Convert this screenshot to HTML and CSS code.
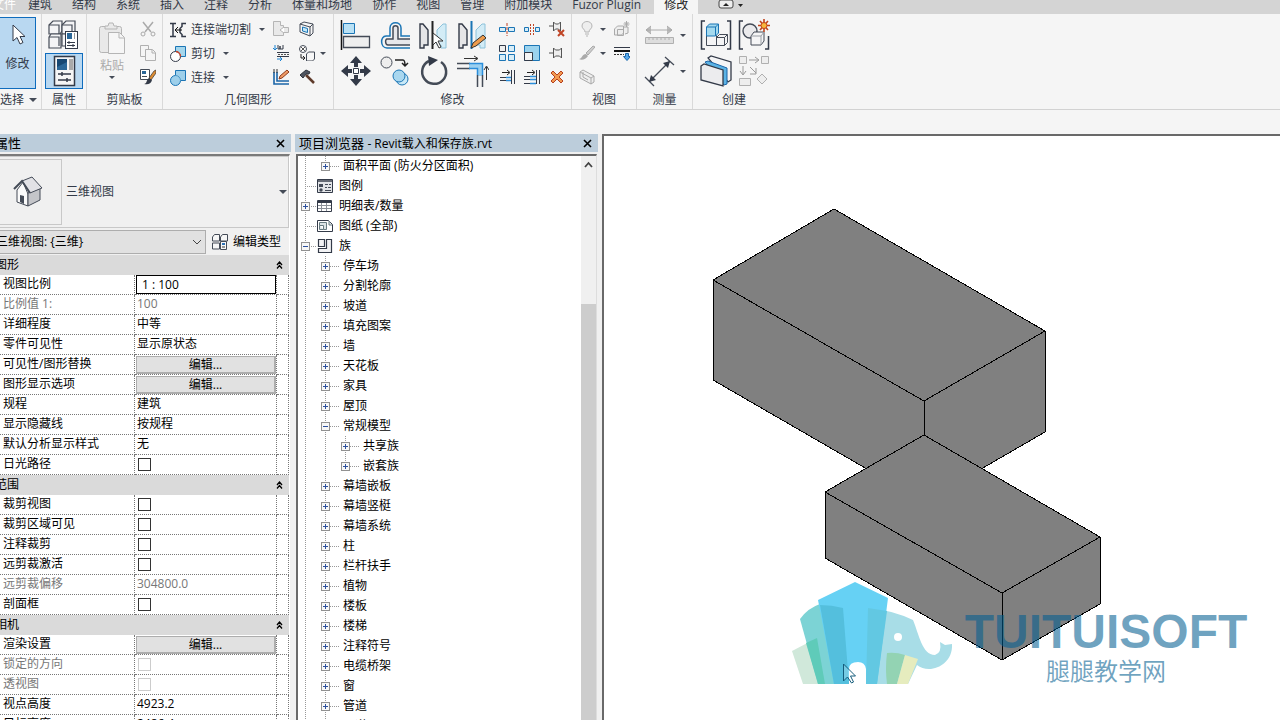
FILE: index.html
```html
<!DOCTYPE html>
<html lang="zh-CN">
<head>
<meta charset="utf-8">
<title>Revit载入和保存族.rvt</title>
<link rel="stylesheet" href="styles.css">
</head>
<body>
<nav class="tabs">
  <button class="tab file">文件</button>
  <button class="tab">建筑</button>
  <button class="tab">结构</button>
  <button class="tab">系统</button>
  <button class="tab">插入</button>
  <button class="tab">注释</button>
  <button class="tab">分析</button>
  <button class="tab">体量和场地</button>
  <button class="tab">协作</button>
  <button class="tab">视图</button>
  <button class="tab">管理</button>
  <button class="tab">附加模块</button>
  <button class="tab">Fuzor Plugin</button>
  <button class="tab active">修改</button>
  <button class="tab-toggle" aria-label="最小化功能区"><svg width="26" height="14" viewBox="0 0 26 14"><rect x="1" y="0" width="14" height="8" rx="2" fill="#eee" stroke="#444"/><path d="M5 6l3-3 3 3z" fill="#222"/><path d="M20 4h5l-2.500 3z" fill="#222"/></svg></button>
</nav>

<header class="ribbon">
  <section class="group select">
    <div class="body">
      <button class="tool modify on"><svg width="20" height="24" viewBox="0 0 20 24"><path d="M5 1v16l4-3.500 3 6.500 3-1.500-3-6h5z" fill="#fff" stroke="#333a48"/></svg><span>修改</span></button>
    </div>
    <h2>选择 <i class="arrow big"></i></h2>
  </section>

  <section class="group props">
    <div class="body">
      <div class="large single">
        <button class="tool" aria-label="类型属性"><svg viewBox="0 0 32 32"><g fill="#f4f4f6" stroke="#454b57" stroke-width="1.200"><path d="M1 6l4-4h9v10l-2 3H1z"/><path d="M14 6l4-4h9v10l-2 3H14z"/><path d="M1 18l2-3h10v14H1z"/><path d="M14 15h10v12H14z"/><path d="M1 6h10v9M14 6h10v6M1 18h10v9" fill="none"/></g><rect x="17.500" y="12.500" width="12" height="17" fill="#fff" stroke="#333a48"/><path d="M19 14h5v6h-5z" fill="#2b6798"/><path d="M26 14h1v6h-1z" fill="#999"/><path d="M19 23.500h8M19 26.500h8M21 22v3M25 25v3" stroke="#333a48"/></svg></button>
        <button class="tool on" aria-label="属性"><svg viewBox="0 0 32 32"><rect x="6.500" y="1.500" width="20" height="29" fill="#f5f5f5" stroke="#333a48" stroke-width="1.500"/><path d="M9 4h10v11H9z" fill="#2b6798"/><path d="M9 4h10v3L9 12z" fill="#174873"/><path d="M21 4h4v11h-4z" fill="#aaa"/><path d="M10 19h13M10 25h13M14 17v4M19 23v4" stroke="#333a48" stroke-width="1.500"/></svg></button>
      </div>
    </div>
    <h2>属性</h2>
  </section>

  <section class="group clip">
    <div class="body">
      <button class="tool paste" disabled><svg width="32" height="34" viewBox="0 0 32 34"><g fill="#e9e9e9" stroke="#b5b5b5"><rect x="3.500" y="4.500" width="22" height="26" rx="2"/><path d="M9 7V4h3l1-3h4l1 3h3v3z"/><path d="M12.500 10.500h11l5 5v16h-16z" fill="#f6f6f6"/><path d="M23 11v5h5" fill="none"/></g></svg><span>粘贴</span><i class="arrow"></i></button>
      <div class="small">
        <button class="tool" aria-label="剪切" disabled><svg viewBox="0 0 16 16"><path d="M3 1l8 10M13 1L5 11" stroke="#aaa" stroke-width="1.500"/><circle cx="3" cy="13" r="2" fill="none" stroke="#aaa"/><circle cx="13" cy="13" r="2" fill="none" stroke="#aaa"/></svg></button>
        <button class="tool" aria-label="复制" disabled><svg viewBox="0 0 16 16"><g fill="#f5f5f5" stroke="#b0b0b0"><path d="M.500 .500h8v11h-8z"/><path d="M5.500 4.500h7l3 3v8h-10z"/><path d="M12 5v3h3"/></g></svg></button>
        <button class="tool" aria-label="匹配类型"><svg viewBox="0 0 16 16"><path d="M.500 .500h9v10h-9z" fill="#fff" stroke="#444b57"/><path d="M2 2h4v3H2z" fill="#2b6798"/><path d="M2 7.500h5" stroke="#444b57"/><path d="M9 9l5-7 2-1v3l-5 7z" fill="#dd8c32" stroke="#333" stroke-width=".700"/><path d="M4 15c3 0 2-4 5-6l3 2c-1 4-4 5-8 4z" fill="#333a48"/></svg></button>
      </div>
    </div>
    <h2>剪贴板</h2>
  </section>

  <section class="group geom">
    <div class="body">
      <div class="small text">
        <button class="tool"><svg viewBox="0 0 16 16"><path d="M0 1.500h6M3 1v13M0 14.500h6M16 1.500h-4v3l-2 2v4l2 2v2h4" fill="none" stroke="#333a48" stroke-width="1.500"/><path d="M5 8h7M8 5L5 8l3 3" stroke="#111" fill="none"/></svg><span>连接端切割</span><i class="arrow"></i></button>
        <button class="tool"><svg viewBox="0 0 16 16"><path d="M5.500 .500h10v10h-10z" fill="#a4d6ec" stroke="#1b75b5"/><circle cx="5.500" cy="10.500" r="5" fill="#fff" stroke="#333a48"/><path d="M6 5.500a5 5 0 0 1 4.500 5" fill="none" stroke="#c6442c" stroke-width="1.500"/></svg><span>剪切</span><i class="arrow"></i></button>
        <button class="tool"><svg viewBox="0 0 16 16"><path d="M5.500 .500h10v10h-5a5 5 0 1 1-5-5z" fill="#9dcfea" stroke="#1b75b5"/><path d="M5.500 5.500a5 5 0 0 1 5 5" fill="none" stroke="#4c9ac8"/></svg><span>连接</span><i class="arrow"></i></button>
      </div>
      <div class="small duo">
        <button class="tool" aria-label="连接端" disabled><svg viewBox="0 0 16 16"><path d="M.500 .500h7v4h3v2h5v5h-5v3h-10z" fill="#e9e9e9" stroke="#b5b5b5"/><path d="M11 6L7 9l4 3" fill="#fff" stroke="#b5b5b5"/></svg></button>
        <button class="tool" aria-label="拆分面"><svg viewBox="0 0 16 16"><path d="M1 3l4-2 9 2v9l-3 3-10-4z" fill="#f6f6f6" stroke="#444b57"/><path d="M11 6l3-3M11 6v9M1 3l10 3" stroke="#444b57" fill="none"/><path d="M3.500 6l5 1.500v4l-5-1.500z" fill="#c6e8f7" stroke="#1b75b5"/></svg></button>
        <button class="tool" aria-label="墙洞口"><svg viewBox="0 0 16 16"><path d="M2 0v5M0 3l2 2 2-2M4 14h5M7 12l2 2-2 2" stroke="#1b82d1" fill="none"/><path d="M5 0v4h2V1v3h3V0M4 7.500h12M4 11.500h12" stroke="#333a48" fill="none"/><path d="M5 9.500h11" stroke="#555" stroke-dasharray="2 1"/></svg></button>
        <button class="tool" aria-label="填色"><svg viewBox="0 0 16 16"><circle cx="4" cy="4" r="3.500" fill="#fff" stroke="#444b57"/><path d="M2 2l4 4M6 2L2 6" stroke="#555"/><path d="M7.500 9l2-2h6v7l-2 2h-6z" fill="#f7f7f7" stroke="#444b57"/><path d="M2 9v4h4M4 11l2 2-2 2" fill="none" stroke="#222"/></svg></button>
        <button class="tool" aria-label="梁柱连接"><svg viewBox="0 0 16 16"><path d="M1 3v12h15M4 3v9h12" stroke="#1b65a8" fill="none" stroke-width="1.600"/><path d="M1 0v4M4 0v4" stroke="#333"/><path d="M6 10l1-3 7-6 2 2-7 6z" fill="#ef9b66" stroke="#8d3d20"/></svg></button>
        <button class="tool" aria-label="拆除"><svg viewBox="0 0 16 16"><path d="M7 6l8 8" stroke="#5e3a2a" stroke-width="2.500"/><path d="M1 6l6-5 4 2-1 2H7L4 9z" fill="#4f5560" stroke="#30343c"/></svg></button>
      </div>
      <i class="arrow side"></i>
    </div>
    <h2>几何图形</h2>
  </section>

  <section class="group edit">
    <div class="body">
      <div class="large four">
        <button class="tool" aria-label="对齐"><svg viewBox="0 0 32 32"><path d="M1.500 1v30" stroke="#111" stroke-width="1.500"/><path d="M3.500 4.500h11v10h-11z" fill="#b9e1f5" stroke="#1b75b5"/><path d="M3.500 17.500h26v11h-26z" fill="#eee" stroke="#444b57" stroke-width="1.300"/></svg></button>
        <button class="tool" aria-label="偏移"><svg viewBox="0 0 32 32"><path d="M31 17h-9V9c0-7-11-7-11 0v8H7c-6 0-6 12 1 12h23" fill="none" stroke="#1b75b5" stroke-width="1.500"/><path d="M31 20h-12V9c0-3-5-3-5 0v11H8c-2 0-2 6 1 6h22" fill="#e7e7ea" stroke="#444b57" stroke-width="1.500"/></svg></button>
        <button class="tool" aria-label="镜像 - 拾取轴"><svg viewBox="0 0 32 32"><path d="M2 5h3l5 6v15H6v3H2z" fill="#e5e5e7" stroke="#333a48" stroke-width="1.400"/><path d="M28 5h-3l-6 6v15h4v3h5z" fill="#d3ecf6" stroke="#8dc2da"/><path d="M14.500 2v28" stroke="#222" stroke-width="2"/><path d="M15 14v12l3-3 3 6 2-1-3-6h5z" fill="#fff" stroke="#333"/></svg></button>
        <button class="tool" aria-label="镜像 - 绘制轴"><svg viewBox="0 0 32 32"><path d="M2 5h3l5 6v15H6v3H2z" fill="#e5e5e7" stroke="#333a48" stroke-width="1.400"/><path d="M28 5h-3l-6 6v15h4v3h5z" fill="#d3ecf6" stroke="#8dc2da"/><path d="M14.500 2v28" stroke="#1b75b5" stroke-width="2"/><path d="M14 29l2-5 10-8 3 3-10 8z" fill="#ed9b4c" stroke="#333"/></svg></button>
        <button class="tool" aria-label="移动"><svg viewBox="0 0 32 32"><path d="M16 1l6 7h-4v4h-4V8h-4zM16 31l6-7h-4v-4h-4v4h-4zM1 16l7-6v4h4v4H8v4zM31 16l-7-6v4h-4v4h4v4z" fill="#333a48"/><path d="M13.500 13.500h5v5h-5z" fill="#fff" stroke="#333a48"/></svg></button>
        <button class="tool" aria-label="复制"><svg viewBox="0 0 32 32"><circle cx="7.500" cy="7.500" r="5.500" fill="#eee" stroke="#444b57"/><path d="M16 5h8q2 0 2 6M23 8l3 3 3-3" fill="none" stroke="#222" stroke-width="1.500"/><g fill="#c9e9f7" stroke="#1b75b5"><circle cx="23" cy="24" r="6"/><circle cx="20" cy="21" r="6" fill="#a9d7ef"/></g></svg></button>
        <button class="tool" aria-label="旋转"><svg viewBox="0 0 32 32"><path d="M11 6a12 12 0 1 0 12 1" fill="none" stroke="#444b57" stroke-width="2.500"/><path d="M10 1l10 4-9 6z" fill="#333a48"/></svg></button>
        <button class="tool" aria-label="修剪/延伸为角"><svg viewBox="0 0 32 32"><path d="M12 9h13v12h-4v-8h-9z" fill="#9cd0f0"/><path d="M0 8.500h13M0 13.500h13M20.500 20v12M25.500 20v12" stroke="#444b57" stroke-width="1.500"/><path d="M12 8.500h13.500V20M12 13.500h8.500V20" fill="none" stroke="#2b8edb" stroke-width="1.500"/><path d="M7 3.500h13M17 1l4 2.500L17 6M29.500 25V12M27 15l2.500-4 2.500 4" fill="none" stroke="#333"/></svg></button>
      </div>
      <div class="small three">
        <button class="tool" aria-label="拆分图元"><svg viewBox="0 0 16 16"><path d="M.500 6.500h6v4h-6zM9.500 6.500h6v4h-6z" fill="#d7edf7" stroke="#1b75b5"/><path d="M8 2v13" stroke="#c04425" stroke-dasharray="3 1"/></svg></button>
        <button class="tool" aria-label="用间隙拆分"><svg viewBox="0 0 16 16"><path d="M.500 6.500h4v4h-4zM11.500 6.500h4v4h-4z" fill="#d7edf7" stroke="#1b75b5"/><path d="M6.500 3v11M9.500 3v11" stroke="#c04425" stroke-dasharray="2 1"/></svg></button>
        <button class="tool" aria-label="解锁"><svg viewBox="0 0 16 16"><path d="M0 5h4M4.500 1v9l2-2h3l2 2V1l-2 2h-3z" fill="#eee" stroke="#555"/><path d="M9 9l6 6M15 9l-6 6" stroke="#c04425" stroke-width="2"/></svg></button>
        <button class="tool" aria-label="阵列"><svg viewBox="0 0 16 16"><g fill="#d7edf7" stroke="#1b75b5"><path d="M.500 .500h6v6h-6z" fill="#eee" stroke="#333a48"/><path d="M9.500 .500h6v6h-6zM.500 9.500h6v6h-6zM9.500 9.500h6v6h-6z"/></g></svg></button>
        <button class="tool" aria-label="缩放"><svg viewBox="0 0 16 16"><path d="M.500 .500h15v15H.500z" fill="#9bd3ee" stroke="#1b75b5"/><path d="M.500 7.500h8v8h-8z" fill="#f4f4f4" stroke="#333a48"/></svg></button>
        <button class="tool" aria-label="锁定"><svg viewBox="0 0 16 16"><path d="M0 8h4M4.500 3v10l2-2h4l2 2V3l-2 2h-4z" fill="#eee" stroke="#555"/></svg></button>
        <button class="tool" aria-label="修剪单个图元"><svg viewBox="0 0 16 16"><path d="M1 8.500h6M1 11.500h6M12.500 1v14M15.500 1v14" stroke="#333a48"/><path d="M7 8.500h5M7 11.500h5" stroke="#2b8edb" stroke-width="1.500"/><path d="M3 3.500h7M8 1l3 2.500L8 6" fill="none" stroke="#222"/></svg></button>
        <button class="tool" aria-label="修剪多个图元"><svg viewBox="0 0 16 16"><path d="M0 7.500h7M0 10.500h7M0 14.500h7M12.500 1v14M15.500 1v14" stroke="#333a48"/><path d="M6 7.500h6M6 10.500h6M6 14.500h6" stroke="#2b8edb" stroke-width="1.500"/><path d="M3 3.500h7M8 1l3 2.500L8 6" fill="none" stroke="#222"/></svg></button>
        <button class="tool" aria-label="删除"><svg viewBox="0 0 16 16"><path d="M2 4l2-2 4 4 4-4 2 2-4 4 4 4-2 2-4-4-4 4-2-2 4-4z" fill="#f29a52" stroke="#b5401e"/></svg></button>
      </div>
    </div>
    <h2>修改</h2>
  </section>

  <section class="group view">
    <div class="body">
      <div class="small viewtools">
        <button class="tool drop" aria-label="隐藏" disabled><svg viewBox="0 0 16 16"><path d="M6 11c0-3-3-3-3-6 0-6 10-6 10 0 0 3-3 3-3 6zM6 13h4M7 15h2" fill="#eee" stroke="#b5b5b5"/></svg><i class="arrow"></i></button>
        <button class="tool" aria-label="置换图元" disabled><svg viewBox="0 0 16 16"><path d="M.500 8l3-3h6v7l-2 2h-7zM3.500 8.500h6v6h-6zM9 6h5v6l-3 1" fill="#eee" stroke="#aaa"/><path d="M12.500 0v6M9.500 3h6M10.500 1l4 4M14.500 1l-4 4" stroke="#aaa"/></svg></button>
        <button class="tool drop" aria-label="替换" disabled><svg viewBox="0 0 16 16"><path d="M7 8l7-7 2 1-7 8z" fill="#ccc" stroke="#aaa"/><path d="M0 14c3 0 3-5 7-5l2 2c-2 3-6 5-9 3z" fill="#aaa"/></svg><i class="arrow"></i></button>
        <button class="tool" aria-label="线处理"><svg viewBox="0 0 16 16"><path d="M0 2.500h16" stroke="#333a48"/><path d="M0 6h16" stroke="#111" stroke-width="2"/><path d="M0 9.500h10" stroke="#333" stroke-dasharray="2 1"/><path d="M11.500 8.500h3v3h2l-3.500 4-3.500-4h2z" fill="#58a9ea" stroke="#1b65a8"/></svg></button>
        <button class="tool drop" aria-label="剖切面" disabled><svg viewBox="0 0 16 16"><path d="M1 3l3-2 11 6v6l-3 2L1 9zM1 3l11 6v6M12 9l3-2M4 3v5l5 3" fill="#eee" stroke="#aaa"/></svg></button>
      </div>
    </div>
    <h2>视图</h2>
  </section>

  <section class="group measure">
    <div class="body">
      <div class="large">
        <button class="tool drop" aria-label="测量" disabled><svg viewBox="0 0 32 32"><path d="M3 11h26M8 7l-5 4 5 4M24 7l5 4-5 4" fill="#bbb" stroke="#aaa"/><path d="M2.500 18.500h28v6h-28zM6 18v3M10 18v3M14 18v3M18 18v3M22 18v3M26 18v3" fill="#ddd" stroke="#b0b0b0"/></svg><i class="arrow"></i></button>
        <button class="tool drop" aria-label="对齐尺寸标注"><svg viewBox="0 0 32 32"><path d="M2 22l9 9M22 2l9 8M6 27L27 6" stroke="#444b57" stroke-width="1.300"/><path d="M6 27l2-7 5 5zM27 6l-7 2 5 5z" fill="#333a48"/></svg><i class="arrow"></i></button>
      </div>
    </div>
    <h2>测量</h2>
  </section>

  <section class="group create">
    <div class="body">
      <div class="large pair">
        <button class="tool" aria-label="创建组"><svg viewBox="0 0 32 32"><path d="M5 2H1.500v28H5M27 2h3.500v28H27" fill="none" stroke="#333a48" stroke-width="1.500"/><g fill="#f4f4f5" stroke="#444b57"><path d="M6.500 16.500h10v10h-10zM16.500 18.500l3-3h8v8l-3 3h-8z"/><path d="M16.500 18.500h8v8M24.500 18.500l3-3" fill="none"/></g><path d="M6.500 8l3-3h9v9l-3 3h-9z" fill="#a5daef" stroke="#1b75b5"/><path d="M6.500 8h9v9M15.500 8l3-3" fill="none" stroke="#1b75b5"/></svg></button>
        <button class="tool" aria-label="创建部件"><svg viewBox="0 0 32 32"><path d="M5 2H1.500v28H5M27 30h3.500V17" fill="none" stroke="#333a48" stroke-width="1.500"/><circle cx="12" cy="12" r="7" fill="#eaeaec" stroke="#444b57" stroke-width="1.400"/><path d="M13 17l3-4h10v9l-3 4H13z" fill="#f5f5f6" stroke="#444b57"/><path d="M13 17h10v9M23 17l3-4" fill="none" stroke="#9a9ea5"/><path d="M26 0v13M20 6.500h12M22 2l8 9M30 2l-8 9" stroke="#c1441d" stroke-width="1.600"/><circle cx="26" cy="6.500" r="3" fill="#f8b73b" stroke="#c1441d"/></svg></button>
        <button class="tool" aria-label="创建类似实例"><svg viewBox="0 0 32 32"><path d="M8 3l3-2 20 6v18l-3 2z" fill="#f5f5f6" stroke="#333a48" stroke-width="1.300"/><path d="M5 7l3-1 19 7v16l-3 1z" fill="#5bb3e5" stroke="#1b65a8"/><path d="M1 11l3-2 19 6v16L1 25z" fill="#ececee" stroke="#333a48" stroke-width="1.300"/></svg></button>
        <button class="tool" aria-label="转换" disabled><svg viewBox="0 0 32 32"><path d="M1.500 1.500h7v7h-7zM23.500 1.500h7v7h-7zM1.500 23.500h11v7h-11zM24 19l5 5-5 5-5-5z" fill="#eee" stroke="#b0b0b0"/><path d="M11 5h9M17 2l4 3-4 3M5 11v8M2 16l3 4 3-4M12 12l6 6M18 13v6h-6" fill="none" stroke="#999"/></svg></button>
      </div>
    </div>
    <h2>创建</h2>
  </section>
</header>

<main class="workspace">
  <section class="panel properties">
    <div class="titlebar"><h1>属性</h1><button class="close" aria-label="关闭属性"><svg width="9" height="9" viewBox="0 0 9 9"><path d="M1 1l7 7M8 1L1 8" stroke="#000" stroke-width="1.600"/></svg></button></div>
    <div class="prop-body">
      <button class="type">
        <span class="thumb"><svg width="32" height="32" viewBox="0 0 32 32"><path d="M5 14v12l11 4V18L11 6z" fill="#fafafa" stroke="#444b57"/><path d="M16 17l12-5v12l-12 6z" fill="#c4c5c9" stroke="#444b57"/><path d="M10 5l10-4 10 11-12 5z" fill="#e2e2e6" stroke="#444b57"/><path d="M2 13l8-8 8 12" fill="none" stroke="#444b57" stroke-width="2"/><path d="M8 19l4 1v8l-4-2z" fill="#444b57"/></svg></span>
        <span>三维视图</span><i class="arrow big"></i>
      </button>
      <div class="filter">
        <select aria-label="类型过滤器"><option>三维视图: {三维}</option></select>
        <svg class="chevron" width="10" height="6" viewBox="0 0 10 6"><path d="M1 1l4 4 4-4" fill="none" stroke="#444"/></svg>
        <button class="edit-type"><svg width="16" height="16" viewBox="0 0 16 16"><g fill="#f7f7f7" stroke="#444b57"><path d="M.500 3l2-2.500h5V7H.500zM8.500 3l2-2.500h5V7h-7zM.500 9h7v6h-7z"/><path d="M8.500 7.500h6v8h-6z"/></g><path d="M10 9h3v2h-3z" fill="#2c70b5"/><path d="M10 13h3" stroke="#333"/></svg>编辑类型</button>
      </div>
      <table class="grid">
        <colgroup><col class="c-name"><col class="c-value"><col></colgroup>
        <tbody>
        <tr class="head"><th colspan="3"><span>图形</span><svg viewBox="0 0 7 8"><path d="M1 4l2.500-3L6 4M1 7.500l2.500-3 2.500 3" fill="none" stroke="#000" stroke-width="1.300"/></svg></th></tr>
        <tr><th>视图比例</th><td class="field"><input aria-label="视图比例" value="1 : 100"></td><td></td></tr>
        <tr class="off"><th>比例值 1:</th><td>100</td><td></td></tr>
        <tr><th>详细程度</th><td>中等</td><td></td></tr>
        <tr><th>零件可见性</th><td>显示原状态</td><td></td></tr>
        <tr><th>可见性/图形替换</th><td class="field"><button>编辑...</button></td><td></td></tr>
        <tr><th>图形显示选项</th><td class="field"><button>编辑...</button></td><td></td></tr>
        <tr><th>规程</th><td>建筑</td><td></td></tr>
        <tr><th>显示隐藏线</th><td>按规程</td><td></td></tr>
        <tr><th>默认分析显示样式</th><td>无</td><td></td></tr>
        <tr><th><label for="sun">日光路径</label></th><td><input type="checkbox" id="sun"></td><td></td></tr>
        <tr class="head"><th colspan="3"><span>范围</span><svg viewBox="0 0 7 8"><path d="M1 4l2.500-3L6 4M1 7.500l2.500-3 2.500 3" fill="none" stroke="#000" stroke-width="1.300"/></svg></th></tr>
        <tr><th><label for="crop">裁剪视图</label></th><td><input type="checkbox" id="crop"></td><td></td></tr>
        <tr><th><label for="cropvis">裁剪区域可见</label></th><td><input type="checkbox" id="cropvis"></td><td></td></tr>
        <tr><th><label for="anno">注释裁剪</label></th><td><input type="checkbox" id="anno"></td><td></td></tr>
        <tr><th><label for="far">远剪裁激活</label></th><td><input type="checkbox" id="far"></td><td></td></tr>
        <tr class="off"><th>远剪裁偏移</th><td>304800.0</td><td></td></tr>
        <tr><th><label for="section">剖面框</label></th><td><input type="checkbox" id="section"></td><td></td></tr>
        <tr class="head"><th colspan="3"><span>相机</span><svg viewBox="0 0 7 8"><path d="M1 4l2.500-3L6 4M1 7.500l2.500-3 2.500 3" fill="none" stroke="#000" stroke-width="1.300"/></svg></th></tr>
        <tr><th>渲染设置</th><td class="field"><button>编辑...</button></td><td></td></tr>
        <tr class="off"><th><label for="lock">锁定的方向</label></th><td><input type="checkbox" id="lock" disabled></td><td></td></tr>
        <tr class="off"><th><label for="persp">透视图</label></th><td><input type="checkbox" id="persp" disabled></td><td></td></tr>
        <tr><th>视点高度</th><td>4923.2</td><td></td></tr>
        <tr><th>目标高度</th><td>2486.4</td><td></td></tr>
        </tbody>
      </table>
    </div>
  </section>

  <section class="panel browser">
    <div class="titlebar"><h1>项目浏览器 <small>- Revit载入和保存族.rvt</small></h1><button class="close" aria-label="关闭项目浏览器"><svg width="9" height="9" viewBox="0 0 9 9"><path d="M1 1l7 7M8 1L1 8" stroke="#000" stroke-width="1.600"/></svg></button></div>
    <div class="browser-body">
      <ul class="tree">
        <li><ul class="short"><li><p><button class="plus" aria-label="展开"></button><span>面积平面 (防火分区面积)</span></p></li></ul></li>
        <li><p class="top"><b></b><svg viewBox="0 0 16 16"><path d="M.500 1.500h15v13H.500z" fill="#e3e5e8" stroke="#333a48"/><path d="M1 3h14" stroke="#666b75" stroke-width="2"/><path d="M2 6h4v3H2z" fill="#444b57"/><circle cx="4" cy="12" r="1.700" fill="#444b57"/><path d="M8 6.500h3M12 6.500h2M8 9.500h2M11 9.500h3M8 12.500h6" stroke="#444b57"/></svg><span>图例</span></p></li>
        <li><p class="top"><button class="plus" aria-label="展开"></button><svg viewBox="0 0 16 16"><path d="M.500 2.500h14v11H.500z" fill="#fff" stroke="#333a48"/><path d="M1 4h13" stroke="#333a48" stroke-width="2"/><path d="M1 7.500h13M1 10.500h13M4.500 5v8M9.500 5v8" stroke="#8b9098"/></svg><span>明细表/数量</span></p></li>
        <li><p class="top"><b></b><svg viewBox="0 0 16 16"><path d="M.500 2.500h11l4 4v7H.500z" fill="#fff" stroke="#333a48"/><path d="M2.500 4.500h7v7h-3v-4h-4zM2.500 7.500v4h4M12 3v4h3" fill="#dce4e5" stroke="#677b80"/></svg><span>图纸 (全部)</span></p></li>
        <li><p class="top"><button class="minus" aria-label="折叠"></button><svg viewBox="0 0 16 16"><path d="M1.500 1.500h6v7h-6zM9.500 1.500h5v13h-13v-4h8z" fill="#f3f3f5" stroke="#333a48" stroke-width="1.200"/></svg><span>族</span></p>
          <ul>
            <li><p><button class="plus" aria-label="展开"></button><span>停车场</span></p></li>
            <li><p><button class="plus" aria-label="展开"></button><span>分割轮廓</span></p></li>
            <li><p><button class="plus" aria-label="展开"></button><span>坡道</span></p></li>
            <li><p><button class="plus" aria-label="展开"></button><span>填充图案</span></p></li>
            <li><p><button class="plus" aria-label="展开"></button><span>墙</span></p></li>
            <li><p><button class="plus" aria-label="展开"></button><span>天花板</span></p></li>
            <li><p><button class="plus" aria-label="展开"></button><span>家具</span></p></li>
            <li><p><button class="plus" aria-label="展开"></button><span>屋顶</span></p></li>
            <li><p><button class="minus" aria-label="折叠"></button><span>常规模型</span></p>
              <ul class="short">
                <li><p><button class="plus" aria-label="展开"></button><span>共享族</span></p></li>
                <li><p><button class="plus" aria-label="展开"></button><span>嵌套族</span></p></li>
              </ul>
            </li>
            <li><p><button class="plus" aria-label="展开"></button><span>幕墙嵌板</span></p></li>
            <li><p><button class="plus" aria-label="展开"></button><span>幕墙竖梃</span></p></li>
            <li><p><button class="plus" aria-label="展开"></button><span>幕墙系统</span></p></li>
            <li><p><button class="plus" aria-label="展开"></button><span>柱</span></p></li>
            <li><p><button class="plus" aria-label="展开"></button><span>栏杆扶手</span></p></li>
            <li><p><button class="plus" aria-label="展开"></button><span>植物</span></p></li>
            <li><p><button class="plus" aria-label="展开"></button><span>楼板</span></p></li>
            <li><p><button class="plus" aria-label="展开"></button><span>楼梯</span></p></li>
            <li><p><button class="plus" aria-label="展开"></button><span>注释符号</span></p></li>
            <li><p><button class="plus" aria-label="展开"></button><span>电缆桥架</span></p></li>
            <li><p><button class="plus" aria-label="展开"></button><span>窗</span></p></li>
            <li><p><button class="plus" aria-label="展开"></button><span>管道</span></p></li>
            <li><p><button class="plus" aria-label="展开"></button><span>风道</span></p></li>
          </ul>
        </li>
      </ul>
      <div class="scrollbar"><svg width="15" height="16" viewBox="0 0 15 16"><path d="M4 11l3.500-4 3.500 4" fill="none" stroke="#444" stroke-width="1.800"/></svg><i></i></div>
    </div>
  </section>

  <section class="canvas">
    <svg class="model" width="676" height="584" viewBox="604 136 676 584">
      <g fill="#808080" stroke="#000" shape-rendering="crispEdges">
        <path d="M834 209L1045 331V432L924 502L713 380V280z"/>
        <path d="M713 280L924 401L1045 331M924 401V502" fill="none"/>
        <path d="M924 435L1100 537V604L1002 660L825 558V492z"/>
        <path d="M825 492L1002 593L1100 537M1002 593V660" fill="none"/>
      </g>
      <path d="M792 651L817 638L825 684H803z" fill="#d0e8da"/>
      <path d="M800 619Q808 608 820 604Q832 605 843 608L849 684H818z" fill="#7cd3d5"/>
      <path d="M806 643L817 638L825 684H818z" fill="#5fcbb9"/>
      <path d="M868 608Q892 610 913 620C919 634 922 655 935 655Q942 653 940 642L945 645L952 644C953 660 940 669 929 669Q922 669 917 665L908 684H866z" fill="#a8dde7"/>
      <path d="M818 600L855 582L888 598L877 684H866V669Q865 662 858 662Q849 662 849 669V684H834z" fill="#66d1f4"/>
      <path d="M820 605Q832 605 843 608L849 684H834z" fill="#54bfdd"/>
      <path d="M868 608L887 611L877 684H866z" fill="#62c8e2"/>
      <path d="M887 653Q896 652 905 655L897 684H887Q885 669 887 653z" fill="#93d3b3"/>
      <path d="M905 655L918 659L908 684H897z" fill="#e6ecbe"/>
      <circle cx="898" cy="637" r="4" fill="#fff"/>
      <path d="M843.500 664v17l4-4 4 6 2-1-3-6h5z" fill="#fff" fill-opacity=".2" stroke="#155d7c"/>
    </svg>
    <div class="watermark"><strong>TUITUISOFT</strong><span>腿腿教学网</span></div>
  </section>
</main>
</body>
</html>
```

FILE: styles.css
```css
* { box-sizing: border-box; }
html, body { height: 100%; }
body {
  margin: 0;
  display: flex;
  flex-direction: column;
  overflow: hidden;
  background: #f0f0f0;
  color: #000;
  font: 12px/20px "Open Sans", "Noto Sans CJK SC", sans-serif;
}
button, input, select { font: inherit; color: inherit; margin: 0; padding: 0; border: 0; background: none; }
h1, h2, p, ul { margin: 0; padding: 0; font-weight: normal; }
ul { list-style: none; }
svg { display: block; flex: none; }

/* Tabs */
.tabs { display: flex; flex: none; height: 14px; overflow: hidden; background: #d4d4d4; color: #333a48; }
.tab { height: 14px; padding: 0 10px 4px; line-height: 10px; white-space: nowrap; }
.tab.file { margin-left: -18px; padding-right: 2px; color: #fff; }
.tab.active { margin-left: 3px; background: #f5f5f5; color: #222; }
.tab-toggle { margin-left: 20px; }

/* Ribbon */
.ribbon { display: flex; flex: none; height: 96px; background: #f5f5f5; border-bottom: 1px solid #d2d2d2; color: #333a48; overflow: hidden; }
.group { display: flex; flex-direction: column; flex: none; padding-top: 3px; border-right: 1px solid #d9d9d9; }
.group h2 { height: 20px; font-size: 12px; line-height: 22px; text-align: center; white-space: nowrap; }
.group .body { display: flex; height: 72px; }
.arrow { display: inline-block; flex: none; border: 3px solid transparent; border-top-color: #444b57; border-bottom: 0; }
.arrow.big { border-width: 4px 4px 0; }
.tool { display: flex; align-items: center; justify-content: center; }
.tool:disabled { color: #aaa; }
.tool.on { background: #b9d8f1; border: 1px solid #0f6cbd; }
.small { display: grid; grid-template-rows: repeat(3, 24px); }
.small svg { width: 16px; height: 16px; }
.large { display: grid; grid-template-rows: repeat(2, 36px); }
.large svg { width: 32px; height: 32px; }
.select { width: 42px; }
.select h2 { margin-left: -4px; }
.select .arrow { margin-left: 2px; vertical-align: 2px; }
.modify { flex-direction: column; gap: 6px; width: 37px; margin-left: -1px; padding-bottom: 8px; }
.props { width: 45px; }
.props .body { padding: 0 3px; }
.single { grid-template-columns: 38px; }
.clip { width: 76px; }
.clip .body { padding-left: 8px; }
.paste { flex-direction: column; width: 34px; padding-bottom: 6px; }
.clip .small { margin-left: 10px; grid-template-columns: 18px; }
.geom { width: 171px; }
.geom .body { padding-left: 7px; }
.geom .text { width: 98px; }
.text .tool { justify-content: flex-start; gap: 5px; padding-top: 1px; white-space: nowrap; }
.text .arrow { margin-left: 3px; }
.duo { grid-template-columns: repeat(2, 26px); }
.geom .side { align-self: center; }
.edit { width: 238px; }
.edit .body { padding-left: 6px; }
.four { grid-template-columns: repeat(3, 39px) 37px; }
.three { grid-template-columns: repeat(3, 25px); }
.four .tool { justify-content: flex-start; }
.view { width: 65px; }
.view .body { padding-left: 7px; }
.viewtools { grid-template-columns: 35px 16px; }
.tool.drop { justify-content: flex-start; gap: 5px; }
.measure { width: 56px; }
.measure .body { padding-left: 6px; }
.create { width: 82px; border-right: 0; }
.create .body { padding-left: 4px; }
.pair { grid-template-columns: repeat(2, 38px); }

/* Workspace */
.workspace { display: flex; flex: 1; min-height: 0; padding-top: 24px; background: linear-gradient(#f5f5f5 24px, #f0f0f0 24px); }
.panel { display: flex; flex-direction: column; flex: none; min-height: 0; }
.titlebar { display: flex; align-items: center; justify-content: space-between; flex: none; height: 18px; margin-bottom: 2px; background: #bccddb; }
.titlebar h1 { font-size: 13px; line-height: 18px; white-space: nowrap; }
.titlebar small { font-size: 12px; }
.close { padding: 4px 6px; }
.properties { width: 291px; margin-right: 4px; overflow: hidden; }
.properties h1 { margin-left: -5px; }
.prop-body { flex: 1; min-height: 0; width: 290px; overflow: hidden; border-top: 2px solid #7a7a7a; border-right: 1px solid #fff; }
.type { display: flex; align-items: center; width: 100%; height: 72px; border: 1px solid #c8c8c8; border-left: 0; color: #333a48; }
.thumb { display: flex; align-items: center; justify-content: center; width: 62px; height: 66px; margin-right: 4px; padding-right: 5px; border: 1px solid #c8c8c8; border-left: 0; }
.type .arrow { margin-left: auto; margin-right: 1px; }
.filter { display: flex; align-items: center; height: 27px; }
.filter select { width: 211px; height: 24px; margin-left: -5px; border: 1px solid #adadad; background: #e1e1e1; appearance: none; }
.chevron { margin-left: -14px; margin-right: 10px; pointer-events: none; }
.edit-type { display: flex; align-items: center; gap: 5px; white-space: nowrap; }
.grid { width: 289px; table-layout: fixed; border-collapse: separate; border-spacing: 0; background: #fff; }
.c-name { width: 135px; }
.c-value { width: 142px; }
.grid tr { height: 20px; }
.grid th, .grid td { height: 20px; padding: 0 0 1px 2px; border-right: 1px dotted #777; border-bottom: 1px dotted #777; font-weight: normal; line-height: 18px; text-align: left; white-space: nowrap; }
.grid th { padding-left: 3px; }
.grid .head th { padding: 0 6px 1px 0; background: #dadada; border: 0; line-height: 19px; }
.head span { display: inline-block; width: 276px; margin-left: -5px; }
.head svg { display: inline-block; width: 7px; height: 8px; vertical-align: 0; margin-left: 5px; }
.off { color: #777; }
.grid .field { padding: 0 0 0 1px; }
.field input { display: block; width: 100%; height: 19px; padding-left: 5px; border: 1px solid #000; background: #fff; }
.field button { display: block; width: 100%; height: 18px; line-height: 16px; border: 1px solid #adadad; border-right-width: 2px; border-bottom-width: 2px; background: #e1e1e1; }
.grid input[type="checkbox"] { display: block; width: 13px; height: 13px; margin: 1px 0 0 1px; appearance: none; border: 1px solid #333; background: #fff; }
.grid input[type="checkbox"]:disabled { border-color: #ccc; }

/* Project browser */
.browser { width: 303px; margin-right: 4px; }
.browser .titlebar { padding-left: 4px; }
.browser-body { display: flex; flex: 1; min-height: 0; margin: 0 1px; border-left: 2px solid #696969; border-top: 2px solid #696969; border-right: 1px solid #ddd; background: #fff; overflow: hidden; }
.tree { flex: 1; }
.tree, .tree ul { background: repeating-linear-gradient(#999 0 1px, transparent 1px 2px) 7px 0 / 1px 100% no-repeat; }
.tree ul { margin-left: 20px; }
.tree .short { background-size: 1px calc(100% - 10px); }
.tree p { display: flex; align-items: center; height: 20px; padding-left: 3px; white-space: nowrap; }
.tree p::before { content: ""; order: 1; width: 10px; height: 1px; background: repeating-linear-gradient(90deg, #999 0 1px, transparent 1px 2px); }
.tree p.top::before { width: 5px; margin: 0 1px; }
.tree p button { flex: none; width: 9px; height: 9px; border: 1px solid #919191; }
.tree p b { width: 9px; height: 1px; background: repeating-linear-gradient(90deg, transparent 0 1px, #999 1px 2px) 5px 0 no-repeat; }
.tree .plus { background: linear-gradient(#2b4f9c, #2b4f9c) 50% 50% / 5px 1px no-repeat, linear-gradient(#2b4f9c, #2b4f9c) 50% 50% / 1px 5px no-repeat, #f7f7f7; }
.tree .minus { background: linear-gradient(#2b4f9c, #2b4f9c) 50% 50% / 5px 1px no-repeat, #f7f7f7; }
.tree p svg { order: 2; width: 16px; height: 16px; margin-right: 3px; }
.tree p span { order: 3; padding-left: 3px; }
.scrollbar { display: flex; flex-direction: column; flex: none; width: 15px; background: #f0f0f0; }
.scrollbar i { flex: 1; margin-top: 132px; background: #cdcdcd; }

/* Drawing area */
.canvas { position: relative; flex: 1; min-width: 0; overflow: hidden; border-left: 2px solid #696969; border-top: 2px solid #696969; background: #fff; }
.watermark { position: absolute; left: 360px; top: 474px; display: flex; flex-direction: column; align-items: center; width: 284px; color: rgba(0, 93, 144, .57); }
.watermark strong { font: bold 48px/44px "Liberation Sans", sans-serif; white-space: nowrap; }
.watermark span { font: 24px/32px "Noto Sans CJK SC", sans-serif; }
```
